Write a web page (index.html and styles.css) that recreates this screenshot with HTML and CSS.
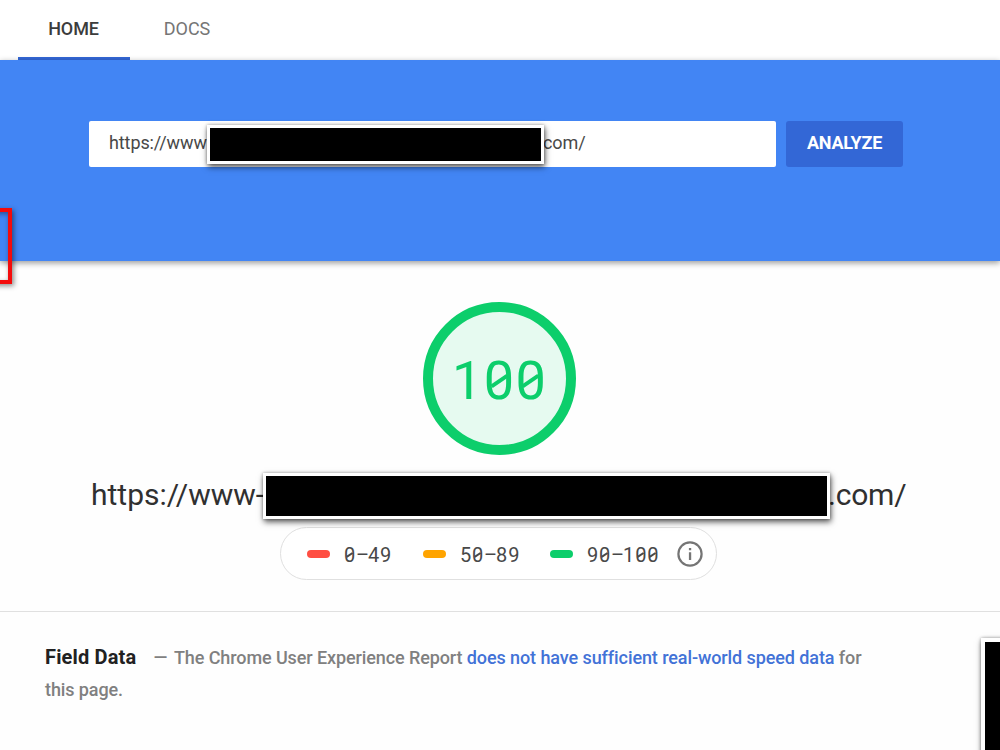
FILE: index.html
```
<!DOCTYPE html>
<html lang="en">
<head>
<meta charset="utf-8">
<title>PageSpeed Insights</title>
<link rel="stylesheet" href="styles.css">
</head>
<body>
<nav class="tabs">
  <a class="tab tab-active">HOME</a>
  <a class="tab tab-docs">DOCS</a>
</nav>
<header class="hero">
  <form class="search">
    <div class="url-field"><span>https://www</span><span class="redaction redaction-field"></span><span>com/</span></div>
    <div class="analyze"><span>ANALYZE</span></div>
  </form>
  <div class="marker-clip"><div class="marker"></div></div>
</header>
<main>
  <section class="summary">
    <div class="gauge"><div class="score">1<span class="zero">0</span><span class="zero">0</span></div></div>
    <div class="site-url"><span class="site-start">https://www-</span><span class="redaction redaction-title"></span><span class="site-end">.com/</span></div>
    <div class="legend">
      <i class="pill fail"></i><span class="range r1"><span class="zero">0</span><span class="dash">–</span>49</span>
      <i class="pill average"></i><span class="range r2">5<span class="zero">0</span><span class="dash">–</span>89</span>
      <i class="pill pass"></i><span class="range r3">9<span class="zero">0</span><span class="dash">–</span>1<span class="zero">0</span><span class="zero">0</span></span>
      <svg class="info" viewBox="0 0 26 26"><circle cx="13" cy="13" r="11.6" fill="none" stroke="#757575" stroke-width="2.2"/><path d="M11.9 7h2.3v2.3h-2.3zM11.9 11.2h2.3v7.8h-2.3z" fill="#757575"/></svg>
    </div>
  </section>
  <section class="field">
    <h2>Field Data</h2><span class="mdash">—</span><span class="report">The Chrome User Experience Report</span> <a class="link">does not have sufficient real-world speed data</a> <span class="for">for</span><br><span class="last">this page.</span>
    <div class="corner-clip"><div class="redaction redaction-corner"></div></div>
  </section>
</main>
</body>
</html>
```
FILE: styles.css
```
* { box-sizing: border-box; }
body { margin: 0; width: 1000px; height: 750px; overflow: hidden; background: #fefefe; color: #212121; font-family: Roboto, sans-serif; }
.tabs { display: flex; height: 60px; padding-left: 18px; background: #fff; }
.tab { width: 112px; padding: 17px 1px 0 0; text-align: center; font-size: 18px; line-height: 23px; font-weight: 500; letter-spacing: -.1px; color: #3c3c3c; border-bottom: 3px solid transparent; }
.tab-active { border-color: #3367d6; }
.tab-docs { width: 115px; font-weight: 400; letter-spacing: 0; color: #757575; }
.hero { position: relative; height: 201px; padding: 61px 0 0 89px; background: #4285f4; box-shadow: 0 2px 6px rgba(0,0,0,.4); }
.search { display: flex; gap: 10px; }
.url-field { display: flex; align-items: flex-start; width: 687px; height: 46px; padding: 4px 0 0 20px; background: #fff; border-radius: 2px; font-size: 18px; line-height: 36px; letter-spacing: -.1px; color: #484848; white-space: nowrap; }
.url-field span:first-child { width: 98px; }
.url-field span:last-child { margin-left: -1px; }
.analyze { width: 117px; height: 46px; border-radius: 3px; background: #3367d6; color: #fff; text-align: center; font-size: 18px; font-weight: 700; line-height: 44px; letter-spacing: -.2px; }
.redaction { flex: none; background: #000; border: 3px solid #fff; box-shadow: 1px 3px 6px rgba(0,0,0,.65), 0 0 3px rgba(0,0,0,.3); }
.redaction-field { position: relative; z-index: 1; width: 337px; height: 39px; }
.marker-clip { position: absolute; left: 0; top: 138px; width: 30px; height: 100px; overflow: hidden; }
.marker { width: 32px; height: 76px; margin: 10px 0 0 -20px; border: 4px solid #f40b0b; box-shadow: 2px 2px 5px rgba(0,0,0,.45), inset 1px 2px 5px rgba(0,0,0,.4); }
.summary { height: 351px; padding-top: 41px; border-bottom: 1px solid #e0e0e0; }
.gauge { width: 153px; height: 153px; margin-left: 423px; border: 10px solid #0cce6b; border-radius: 50%; background: #e6faf0; }
.score { padding: 36px 0 0 19px; color: #0cce6b; font-size: 54px; line-height: 65px; letter-spacing: 1.4px; white-space: nowrap; }
.zero { position: relative; }
.zero::after { content: ""; position: absolute; left: .11em; top: 48%; width: .35em; height: .075em; background: currentColor; transform: rotate(-34deg); }
.site-url { display: flex; height: 72px; padding: 17px 0 0 91px; font-size: 30px; line-height: 46px; color: #303030; white-space: nowrap; }
.site-start { width: 172px; }
.site-end { margin-left: -2px; letter-spacing: -.2px; }
.redaction-title { position: relative; z-index: 1; width: 567px; height: 46px; margin-top: 1px; }
.legend { display: flex; align-items: center; width: 437px; height: 53px; margin-left: 280px; padding-left: 26px; border: 1px solid #e0e0e0; border-radius: 27px; background: #fff; font-size: 20px; color: #484848; }
.pill { width: 23px; height: 8px; border-radius: 4px; margin-right: 14px; }
.fail { background: #ff4e42; } .average { background: #ffa400; } .pass { background: #0cce6b; }
.range { padding-top: 2px; letter-spacing: .8px; white-space: nowrap; }
.dash { display: inline-block; width: 12px; }
.r1 { width: 79px; } .r2 { width: 90px; } .r3 { width: 90px; }
.info { width: 26px; height: 26px; }
.field { position: relative; height: 138px; padding: 30px 45px 0; color: #808080; font-size: 18px; font-weight: 500; line-height: 32px; letter-spacing: -.1px; white-space: nowrap; }
h2 { display: inline-block; width: 108.5px; margin: 0; color: #212121; font-size: 20px; line-height: 31px; font-weight: 700; letter-spacing: .15px; }
.mdash { display: inline-block; width: 20.5px; }
.link { color: #4272d7; letter-spacing: -.09px; }
.corner-clip { position: absolute; right: 0; bottom: 0; width: 30px; height: 123px; overflow: hidden; }
.redaction-corner { width: 26px; height: 130px; margin: 11px 0 0 11px; border-width: 4px; }
```
